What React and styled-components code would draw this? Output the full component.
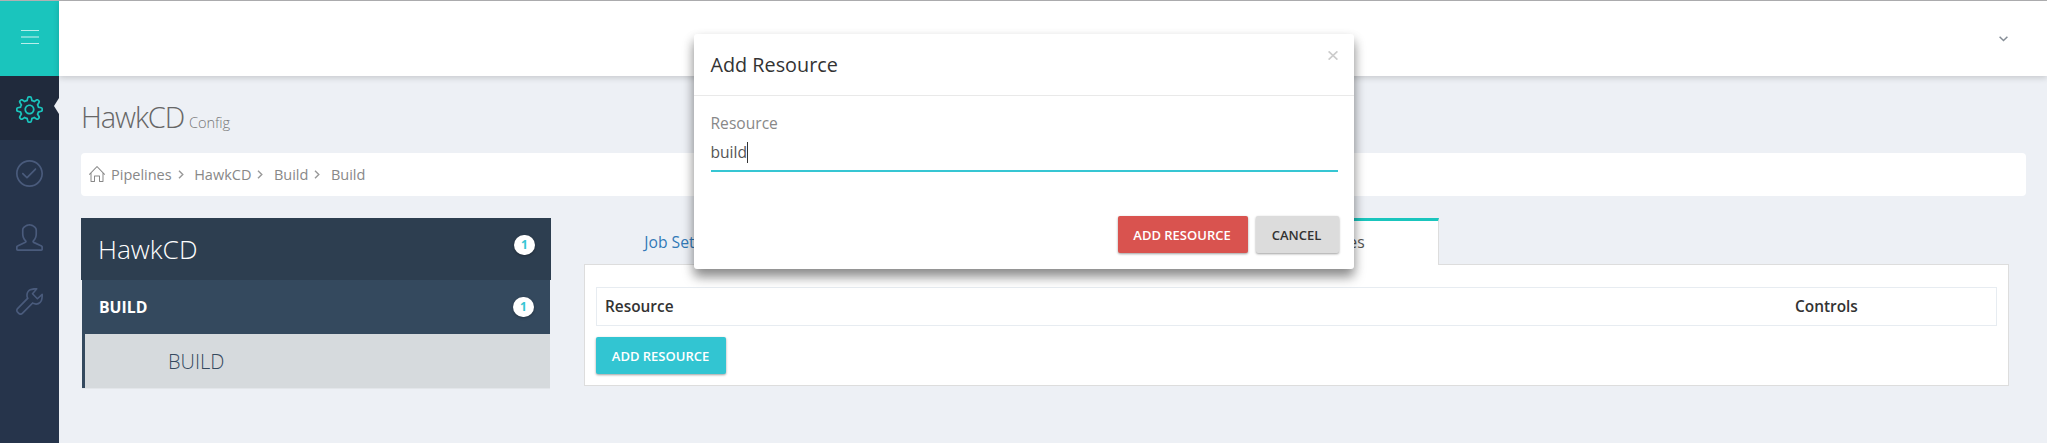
import React from 'react';
import styled, { createGlobalStyle } from 'styled-components';
import { SlSettings, SlCheck, SlUser, SlWrench, SlHome } from 'react-icons/sl';

const GlobalStyle = createGlobalStyle`
  * { box-sizing: border-box; }
  body {
    margin: 0;
    background: #edf0f5;
    font-family: "Open Sans", "Noto Sans", sans-serif;
    font-size: 14.5px;
    color: #333;
    overflow: hidden;
  }
`;

const Page = styled.div`
  display: flex;
  height: 443px;
  border-top: 1px solid #b1b1b3;
`;

const Sidebar = styled.nav`
  display: flex;
  flex-direction: column;
  flex: none;
  width: 59px;
  background: #26344b;
`;

const MenuToggle = styled.div`
  display: flex;
  align-items: center;
  justify-content: center;
  height: 75px;
  padding: 0 0 3px 1px;
  background: #1ac5bd;
`;

const NavItem = styled.div`
  position: relative;
  display: flex;
  align-items: center;
  justify-content: center;
  height: 64px;
  padding-top: 3px;
  background: ${(p) => (p.$active ? '#202a3c' : 'transparent')};
  color: ${(p) => (p.$active ? '#1ac5bd' : '#4a5b7c')};
  font-size: 27px;
`;

const ActiveArrow = styled.span`
  position: absolute;
  right: 0;
  top: 22px;
  border: solid transparent;
  border-width: 8px 5px 8px 0;
  border-right-color: #edf0f5;
`;

const Main = styled.div`
  flex: 1;
  min-width: 0;
`;

const TopBar = styled.header`
  display: flex;
  align-items: center;
  justify-content: flex-end;
  height: 75px;
  padding-right: 39px;
  background: #fff;
  box-shadow: 0 2px 6px rgba(0, 0, 0, 0.16);
`;

const Content = styled.main`
  padding: 22px 21px 0 22px;
`;

const PageTitle = styled.h1`
  height: 55px;
  margin: 0;
  color: #666;
  font-size: 29px;
  font-weight: 300;
  line-height: 38px;
  letter-spacing: -1.1px;
`;

const PageSubtitle = styled.small`
  margin-left: 5px;
  color: #777;
  font-size: 14.6px;
  letter-spacing: -0.1px;
`;

const Breadcrumb = styled.div`
  display: flex;
  align-items: center;
  height: 43px;
  padding: 0 8px 1px;
  border-radius: 4px;
  background: #fff;
  color: #888;
`;

const Crumb = styled.span`
  display: flex;
  align-items: center;
  gap: 6px;
  margin-right: 10.5px;
`;

const Columns = styled.div`
  display: flex;
  align-items: flex-start;
  margin-top: 22px;
`;

const Tree = styled.aside`
  flex: none;
  width: 470px;
  margin-right: 33px;
`;

const TreeGroup = styled.div`
  display: flex;
  justify-content: space-between;
  height: 62px;
  padding: 17px 16px 0 17px;
  background: #2d3e50;
  color: #fff;
  font-size: 26.3px;
  font-weight: 300;
  line-height: 28px;
`;

const TreeBody = styled.div`
  margin: 0 1px;
  border-bottom: 1px solid #e3e6ea;
`;

const TreePipeline = styled.div`
  display: flex;
  justify-content: space-between;
  height: 54px;
  padding: 17px 16px 0 17px;
  background: #34495e;
  color: #fff;
  font-size: 15.8px;
  font-weight: 700;
  line-height: 20px;
`;

const TreeJob = styled.div`
  height: 54px;
  padding-left: 83px;
  border-left: 3px solid #34495e;
  background: #d6dadd;
  color: #34495e;
  font-size: 20px;
  font-weight: 300;
  line-height: 55px;
`;

const Badge = styled.span`
  width: 21px;
  height: 20px;
  border-radius: 10px;
  background: #fff;
  box-shadow: 0 1px 3px rgba(0, 0, 0, 0.3);
  color: #36c6d3;
  font-size: 12px;
  font-weight: 700;
  line-height: 19px;
  text-align: center;
`;

const TabArea = styled.section`
  width: 1425px;
`;

const Tabs = styled.div`
  display: flex;
  justify-content: space-between;
  width: 855px;
  height: 47px;
  margin-bottom: -1px;
`;

const Tab = styled.div`
  width: ${(p) => (p.$active ? 223 : 206)}px;
  border-top: 3px solid ${(p) => (p.$active ? '#1ac5bd' : 'transparent')};
  border-right: ${(p) => (p.$active ? '1px solid #ddd' : '0')};
  background: ${(p) => (p.$active ? '#fff' : 'transparent')};
  color: ${(p) => (p.$active ? '#555' : '#337ab7')};
  font-size: 15.7px;
  line-height: 42px;
  text-align: center;
  z-index: 1;
`;

const TabPanel = styled.div`
  height: 122px;
  padding: 22px 11px 0;
  border: 1px solid #ddd;
  background: #fff;
`;

const TableHead = styled.div`
  display: grid;
  grid-template-columns: 1190px 1fr;
  align-items: center;
  height: 39px;
  margin-bottom: 11px;
  padding: 1px 0 0 8px;
  border: 1px solid #e7ecf1;
  font-size: 15.4px;
  font-weight: 600;
  line-height: 22px;
`;

const buttonTones = {
  info: ['#32c5d2', '#fff'],
  danger: ['#d9534f', '#fff'],
  plain: ['#dcdcdc', '#333'],
};

const Button = styled.button`
  width: ${(p) => p.$width || 130}px;
  height: 37px;
  padding: 0 1px 0 0;
  border: 0;
  border-radius: 2px;
  background: ${(p) => buttonTones[p.$tone][0]};
  box-shadow: 0 1px 3px rgba(0, 0, 0, 0.2), 0 1px 2px rgba(0, 0, 0, 0.2);
  color: ${(p) => buttonTones[p.$tone][1]};
  font: 600 13px "Open Sans", sans-serif;
  text-transform: uppercase;
`;

const Dialog = styled.div`
  position: absolute;
  z-index: 2;
  top: 34px;
  left: 694px;
  width: 660px;
  height: 235px;
  border-radius: 3px;
  background: #fff;
  box-shadow: 0 8px 12px rgba(0, 0, 0, 0.4), 0 4px 12px rgba(0, 0, 0, 0.12);
`;

const DialogHeader = styled.div`
  display: flex;
  justify-content: space-between;
  height: 62px;
  padding: 17px 16px 0 16.5px;
  border-bottom: 1px solid #e9e9e9;
  font-size: 19.8px;
  line-height: 28px;
`;

const DialogBody = styled.div`
  height: 120px;
  padding: 15px 16px 0 17px;
  font-size: 15.6px;
`;

const FieldLabel = styled.label`
  display: block;
  margin-left: -0.5px;
  color: #888;
  line-height: 25px;
`;

const Field = styled.div`
  display: flex;
  align-items: center;
  height: 36px;
  padding-bottom: 2px;
  border-bottom: 2px solid #36c6d3;
  color: #555;
`;

const FieldValue = styled.span`
  margin-left: -0.5px;
`;

const Caret = styled.span`
  width: 1px;
  height: 21px;
  margin-left: -0.5px;
  background: #333;
`;

const DialogFooter = styled.div`
  display: flex;
  justify-content: flex-end;
  gap: 8px;
  padding-right: 15.5px;
`;

const Chevron = () => (
  <svg width="6" height="9" viewBox="0 0 6 9" fill="none" stroke="#999" strokeWidth="1.4">
    <path d="M1 0.7 4.8 4.5 1 8.3" />
  </svg>
);

export default function App() {
  return (
    <>
      <GlobalStyle />
      <Page>
        <Sidebar>
          <MenuToggle>
            <svg width="18" height="14" viewBox="0 0 18 14" fill="#fff">
              <rect width="18" height="1" opacity=".7" />
              <rect y="6" width="18" height="2" opacity=".4" />
              <rect y="13" width="18" height="1" opacity=".7" />
            </svg>
          </MenuToggle>
          <NavItem $active>
            <SlSettings />
            <ActiveArrow />
          </NavItem>
          <NavItem><SlCheck /></NavItem>
          <NavItem><SlUser /></NavItem>
          <NavItem><SlWrench /></NavItem>
        </Sidebar>
        <Main>
          <TopBar>
            <svg width="9" height="6" viewBox="0 0 9 6" fill="none" stroke="#858d96" strokeWidth="1.5">
              <path d="M0.6 0.7 4.5 4.5 8.4 0.7" />
            </svg>
          </TopBar>
          <Content>
            <PageTitle>HawkCD<PageSubtitle>Config</PageSubtitle></PageTitle>
            <Breadcrumb>
              <Crumb><SlHome size={16} />Pipelines<Chevron /></Crumb>
              <Crumb>HawkCD<Chevron /></Crumb>
              <Crumb>Build<Chevron /></Crumb>
              <Crumb>Build</Crumb>
            </Breadcrumb>
            <Columns>
              <Tree>
                <TreeGroup>HawkCD<Badge>1</Badge></TreeGroup>
                <TreeBody>
                  <TreePipeline>BUILD<Badge>1</Badge></TreePipeline>
                  <TreeJob>BUILD</TreeJob>
                </TreeBody>
              </Tree>
              <TabArea>
                <Tabs>
                  <Tab>Job Settings</Tab>
                  <Tab $active>Resources</Tab>
                </Tabs>
                <TabPanel>
                  <TableHead>
                    <span>Resource</span>
                    <span>Controls</span>
                  </TableHead>
                  <Button $tone="info">Add Resource</Button>
                </TabPanel>
              </TabArea>
            </Columns>
          </Content>
        </Main>
      </Page>
      <Dialog role="dialog">
        <DialogHeader>
          Add Resource
          <svg width="10" height="9" viewBox="0 0 10 9" stroke="#ccc" strokeWidth="1.7">
            <path d="M0.6 0.4 9.4 8.6M9.4 0.4 0.6 8.6" />
          </svg>
        </DialogHeader>
        <DialogBody>
          <FieldLabel>Resource</FieldLabel>
          <Field><FieldValue>build</FieldValue><Caret /></Field>
        </DialogBody>
        <DialogFooter>
          <Button $tone="danger">Add Resource</Button>
          <Button $tone="plain" $width={83}>Cancel</Button>
        </DialogFooter>
      </Dialog>
    </>
  );
}
